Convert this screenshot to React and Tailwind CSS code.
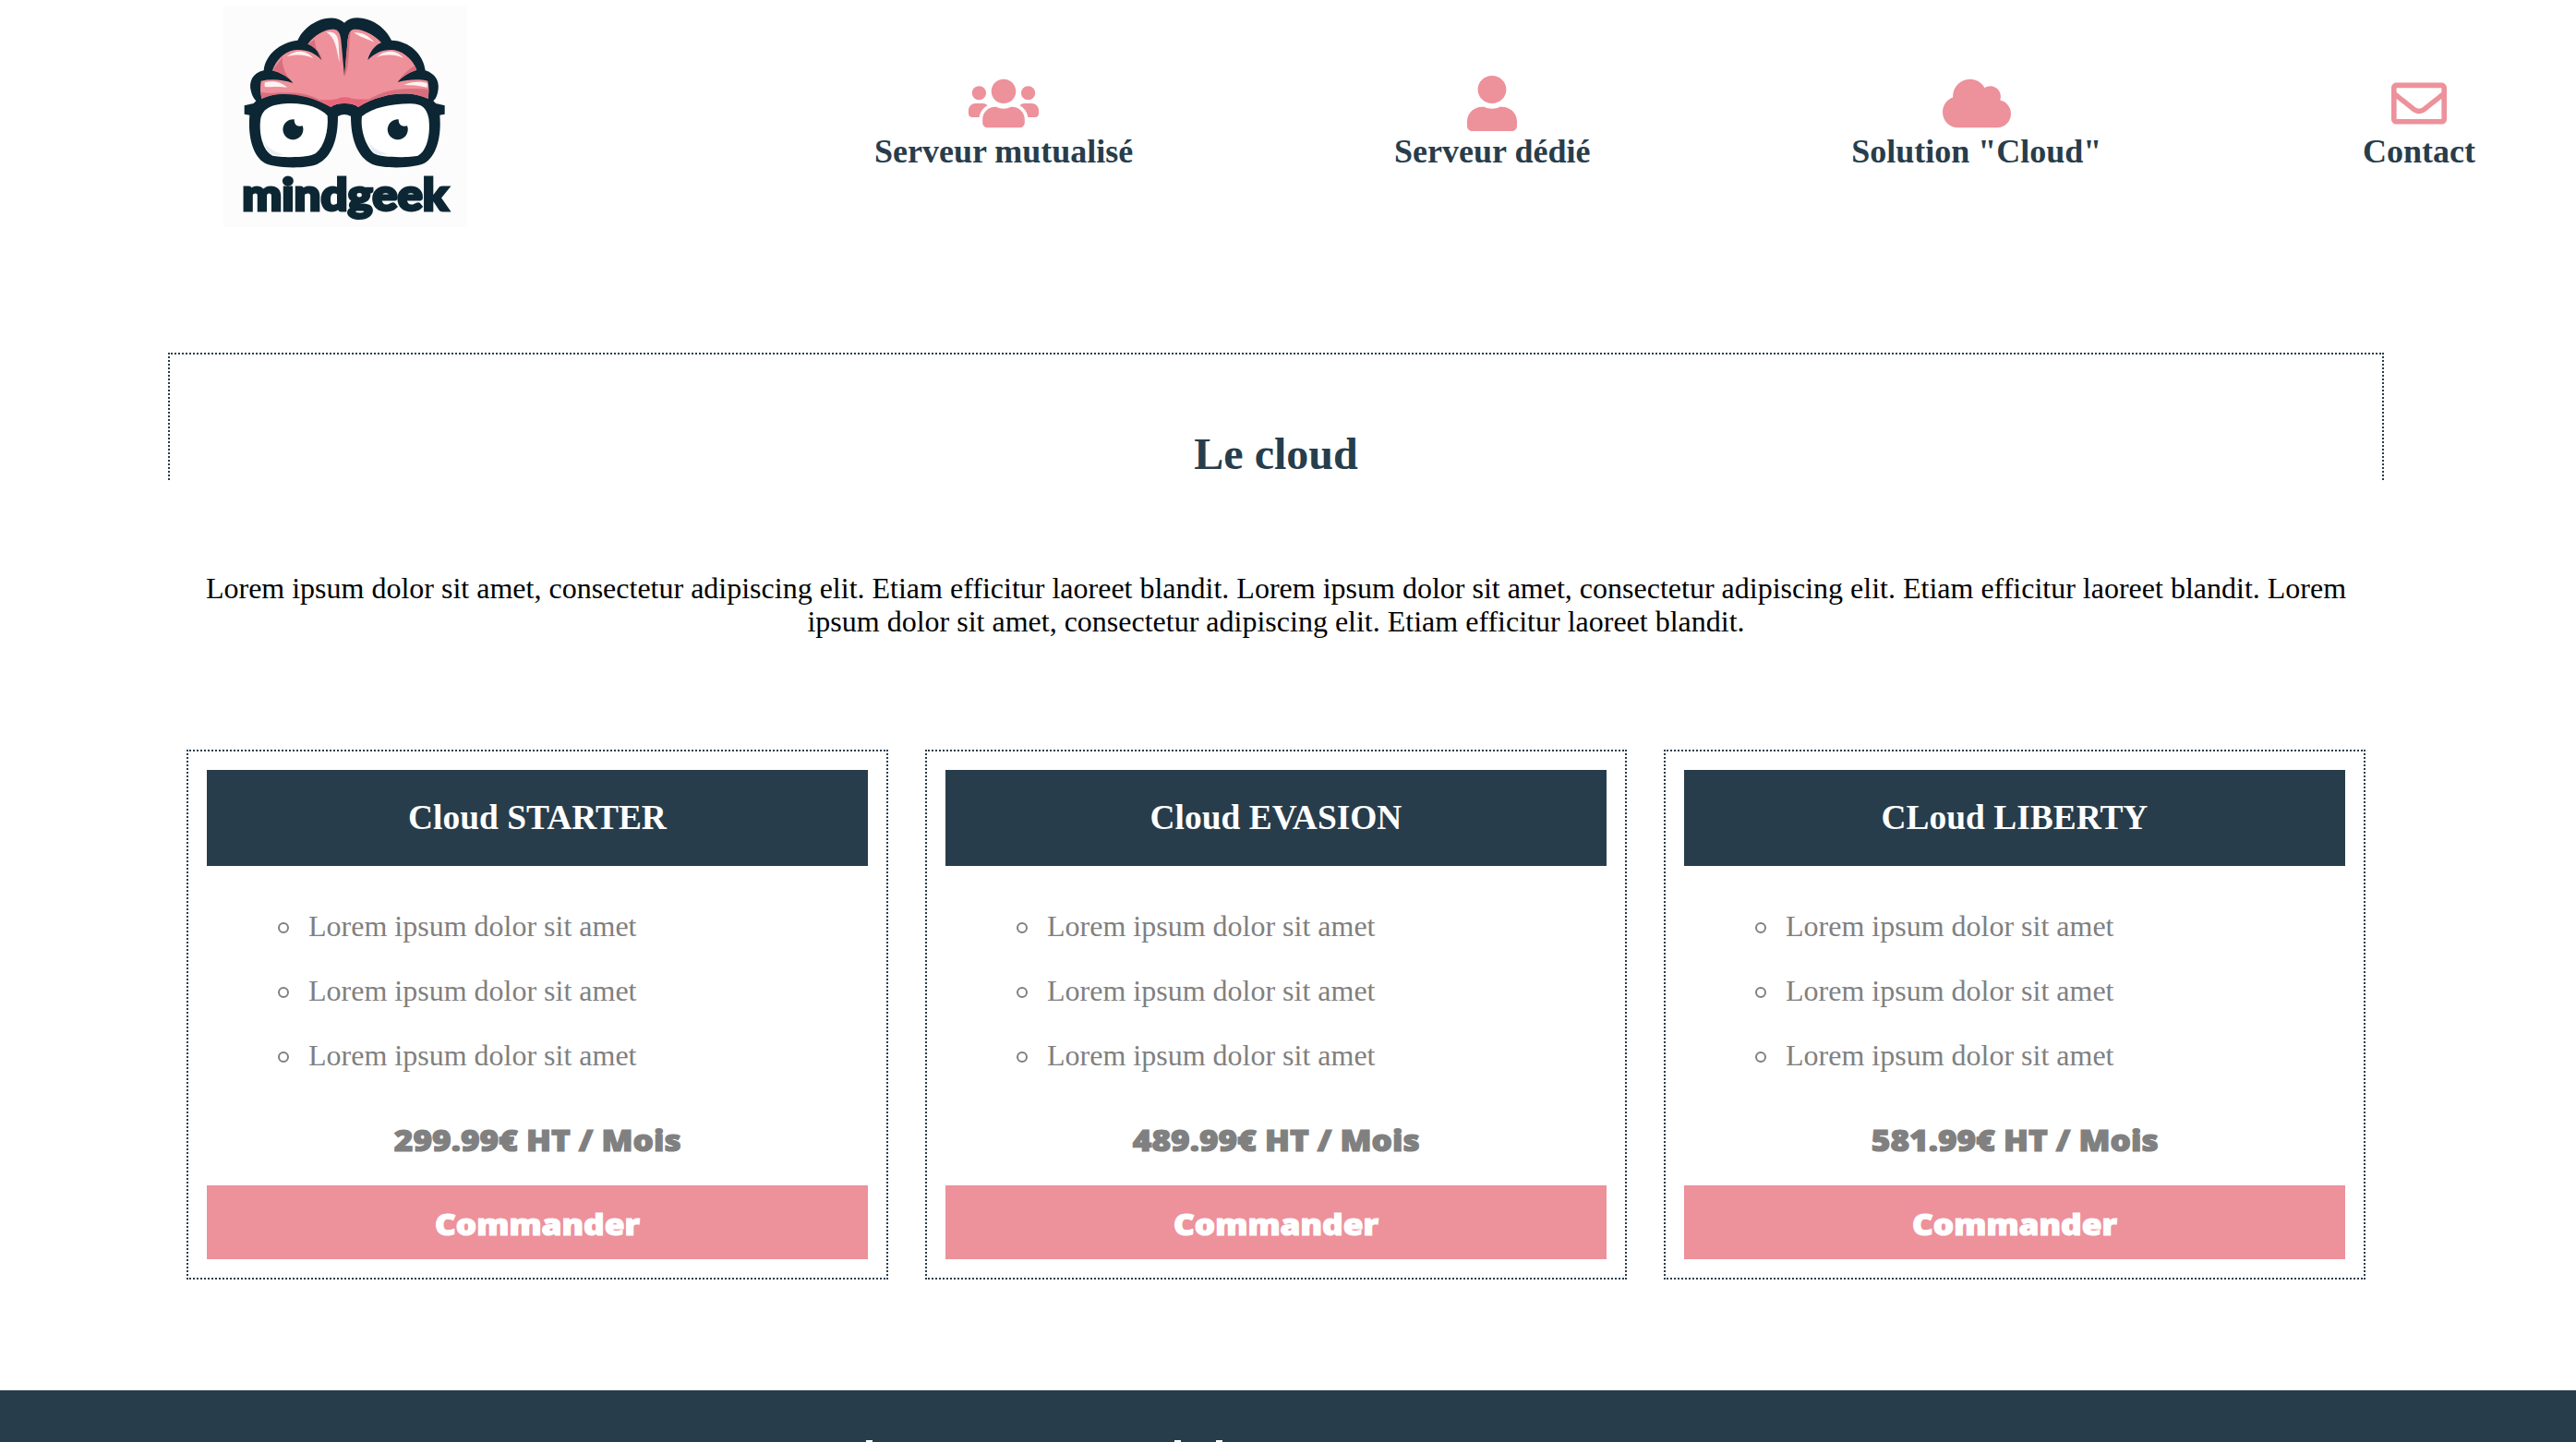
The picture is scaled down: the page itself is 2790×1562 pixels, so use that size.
import { FaUsers, FaUser, FaCloud, FaRegEnvelope } from "react-icons/fa";

const navItems = [
  { label: "Serveur mutualisé", Icon: FaUsers, icon: "w-[76px] h-[60px]" },
  { label: "Serveur dédié", Icon: FaUser, icon: "w-[54px] h-[60px]" },
  { label: 'Solution "Cloud"', Icon: FaCloud, icon: "w-[74px] h-[60px]" },
  { label: "Contact", Icon: FaRegEnvelope, icon: "w-[60px] h-[60px]" },
];

const plans = [
  { name: "Cloud STARTER", price: "299.99€ HT / Mois" },
  { name: "Cloud EVASION", price: "489.99€ HT / Mois" },
  { name: "CLoud LIBERTY", price: "581.99€ HT / Mois" },
];

const lorem = "Lorem ipsum dolor sit amet";
const sentence = "Lorem ipsum dolor sit amet, consectetur adipiscing elit. Etiam efficitur laoreet blandit.";
const intro = [sentence, sentence, sentence].join(" ");

function Logo() {
  return (
    <svg viewBox="36 18 792 720" className="h-[240px] w-[264px] bg-[#fcfcfc]">
      <g fill="#0c2733">
        <path d="M429 74C408 54 374 54 342 68C310 82 288 106 277 131C222 137 172 176 167 229C130 236 117 268 126 298C129 312 136 322 142 328L134 336L104 343V371L121 374C116 440 128 496 164 526C190 547 300 550 340 534C390 510 408 450 408 378Q429 366 450 378C450 450 470 510 520 534C560 550 670 547 696 526C732 496 744 440 739 374L755 371V343L726 336L718 328C728 320 732 306 734 290C738 262 722 238 692 229C686 176 640 133 582 131C568 104 546 80 514 67C480 54 448 54 429 74Z" />
      </g>
      <path fill="#ee919b" d="M310 143C335 110 372 92 398 96C414 99 418 118 420 150L429 248L438 150C440 118 444 99 458 96C486 92 530 116 549 139C526 148 510 172 505 195C530 170 560 158 592 163C628 170 654 200 664 227C638 236 614 250 602 267C636 258 672 256 700 263C704 282 704 300 701 321C650 296 560 296 474 348Q459 336 429 336Q400 336 385 348C300 296 210 296 160 321C155 300 155 282 158 263C190 256 226 258 262 270C246 248 220 236 195 229C206 198 232 168 266 163C300 158 332 170 355 195C350 172 334 152 310 143Z" />
      <g fill="#d96f7e">
        <path d="M310 143L333 128C332 152 345 176 355 195C350 172 334 152 310 143Z" />
        <path d="M195 229L228 186C224 214 240 248 262 270C246 248 220 236 195 229Z" />
        <path d="M664 227C638 236 614 250 602 267C616 244 638 226 657 214Z" />
        <path d="M160 321L158 300C180 304 200 304 218 301C290 299 330 306 385 348C300 300 210 296 160 321Z" />
        <path d="M510 322C560 292 610 284 703 290L701 321C650 296 560 296 474 348Z" />
        <path d="M438 150Q440 110 450 100C440 160 448 220 429 248Z" />
      </g>
      <path fill="#e8667c" d="M349 324Q390 326 408 320Q430 312 454 320Q480 324 510 322L474 348Q459 336 429 336Q400 336 385 348Z" />
      <g fill="#fff2f2">
        <path d="M370 104C394 100 408 110 410 140L413 202C404 166 402 122 370 104Z" />
        <path d="M460 106C486 104 508 116 526 138C504 126 480 122 460 106Z" />
        <path d="M242 184C272 160 306 162 328 190C302 176 270 176 242 184Z" />
        <path d="M534 186C562 160 598 162 620 188C592 176 562 176 534 186Z" />
        <path d="M170 268C200 260 226 268 243 284C220 280 196 284 170 282Z" />
        <path d="M622 276C648 264 676 264 698 270V284C672 278 648 276 622 276Z" />
      </g>
      <g fill="#fff">
        <path d="M157 385C164 350 200 336 256 336C310 337 350 350 374 376C378 424 364 476 336 498C312 514 222 512 196 506C162 490 150 430 157 385Z" />
        <path d="M703 385C696 350 680 336 640 337C580 338 520 350 486 378C480 424 500 476 524 498C548 514 644 512 668 506C696 492 710 440 703 385Z" />
      </g>
      <g fill="#e8eef2">
        <path d="M164 456Q184 490 230 502Q196 508 182 494Z" />
        <path d="M504 456Q524 490 570 500Q536 508 522 494Z" />
      </g>
      <g fill="#0c2733">
        <path d="M266 388A33 33 0 1 0 293 409Q284 411 276 409Q266 404 266 388Z" />
        <path d="M605 388A33 33 0 1 0 633 409Q624 411 616 409Q605 404 605 388Z" />
        <text
          x="97"
          y="683"
          textLength="670"
          lengthAdjust="spacingAndGlyphs"
          stroke="#0c2733"
          strokeWidth="9"
          className="font-['Lato',sans-serif] text-[142px] font-black"
        >
          mindgeek
        </text>
      </g>
    </svg>
  );
}

function Header() {
  return (
    <header className="flex h-[382px] items-start pt-[6px] pl-[242px]">
      <Logo />
      <nav className="mt-[76px] ml-[441px] flex w-[1734px] justify-between">
        {navItems.map(({ label, Icon, icon }) => (
          <a key={label} className="flex flex-col items-center">
            <Icon preserveAspectRatio="none" className={`text-[#ed919b] ${icon}`} />
            <span className="text-[36px] leading-[45px] font-bold whitespace-nowrap text-[#283d4b]">{label}</span>
          </a>
        ))}
      </nav>
    </header>
  );
}

function Plan({ name, price }) {
  return (
    <article className="flex h-[574px] w-[760px] flex-col border-2 border-dotted border-[#283d4b] p-5">
      <h3 className="h-[104px] bg-[#283d4b] text-center text-[37.44px] leading-[103px] font-bold text-white">{name}</h3>
      <ul className="mt-[47px] flex flex-col gap-[34px] pl-[110px] text-[32px] leading-[36px] text-[#808080]">
        {[0, 1, 2].map((i) => (
          <li key={i} className="flex items-center">
            <span className="mt-[3px] mr-[21px] ml-[-33px] size-[12px] rounded-full border-2 border-[#808080]" />
            {lorem}
          </li>
        ))}
      </ul>
      <div className="mt-auto flex h-[99px] items-center justify-center font-['Open_Sans',sans-serif] text-[32px] font-extrabold text-[#808080]">
        <span className="scale-x-[1.1] whitespace-nowrap [-webkit-text-stroke:1.2px]">{price}</span>
      </div>
      <button className="flex h-[80px] shrink-0 items-center justify-center bg-[#ed919b] pt-[3px] font-['Open_Sans',sans-serif] text-[32px] font-extrabold text-white">
        <span className="scale-x-[1.1] [-webkit-text-stroke:1.2px]">Commander</span>
      </button>
    </article>
  );
}

function Footer() {
  return (
    <footer className="mt-auto flex h-[56px] shrink-0 items-end bg-[#283d4b] pl-[938px]">
      <span className="h-[2px] w-[7px] bg-white" />
      <span className="ml-[327px] h-[2px] w-[7px] bg-white" />
      <span className="ml-[38px] h-[2px] w-[7px] bg-white" />
    </footer>
  );
}

export default function App() {
  return (
    <div className="flex h-[1562px] w-[2790px] flex-col overflow-hidden bg-white font-['Liberation_Serif',serif]">
      <Header />
      <main className="ml-[182px] w-[2400px]">
        <h2 className="h-[138px] border-2 border-b-0 border-dotted border-[#283d4b] pt-[80px] text-center text-[48px] leading-[56px] font-bold text-[#283d4b]">
          Le cloud
        </h2>
        <p className="mt-[99px] px-[40px] text-center text-[32px] leading-[36px] text-black">{intro}</p>
        <section className="mt-[121px] flex gap-10 px-5">
          {plans.map((plan) => (
            <Plan key={plan.name} {...plan} />
          ))}
        </section>
      </main>
      <Footer />
    </div>
  );
}
